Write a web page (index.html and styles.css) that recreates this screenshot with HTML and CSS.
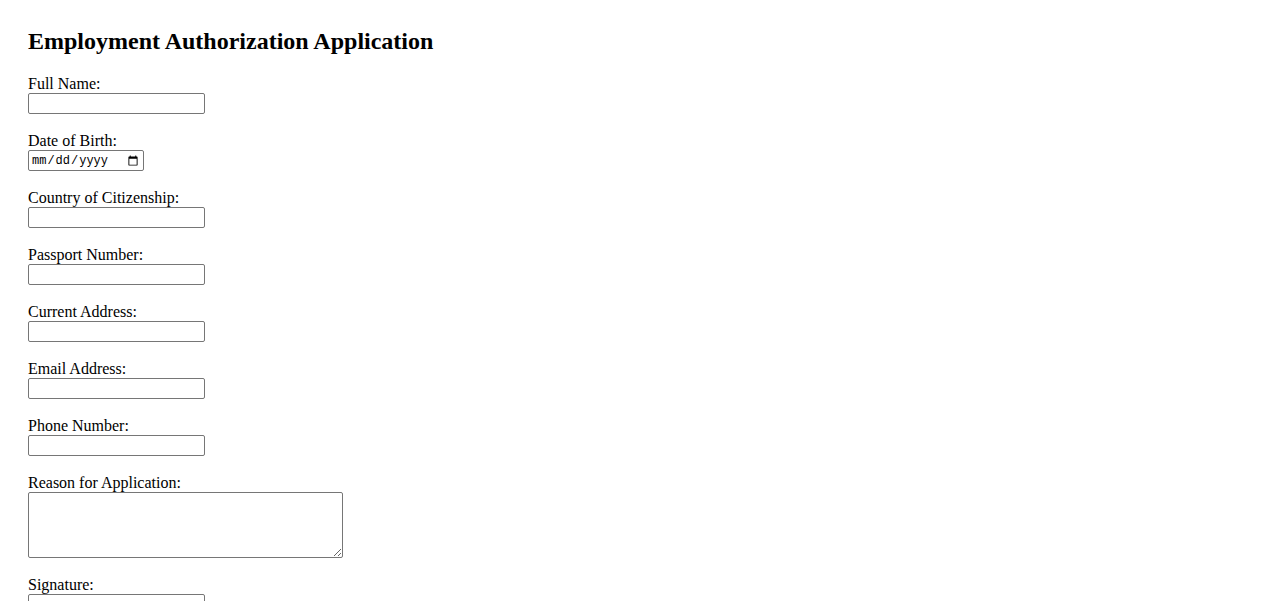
FILE: index.html
```html
<!DOCTYPE html>
<html lang="en">
<head>
<meta charset="utf-8">
<title>Employment Authorization Application</title>
<link rel="stylesheet" href="styles.css">
</head>
<body>
<div class="page">
  <h2 class="title">Employment Authorization Application</h2>
  <form class="form">
    <div class="field"><label for="fullname">Full Name:</label><input class="text" type="text" id="fullname"></div>
    <div class="field"><label for="dob">Date of Birth:</label><input class="date" type="date" id="dob"></div>
    <div class="field"><label for="country">Country of Citizenship:</label><input class="text" type="text" id="country"></div>
    <div class="field"><label for="passport">Passport Number:</label><input class="text" type="text" id="passport"></div>
    <div class="field"><label for="address">Current Address:</label><input class="text" type="text" id="address"></div>
    <div class="field"><label for="email">Email Address:</label><input class="text" type="email" id="email"></div>
    <div class="field"><label for="phone">Phone Number:</label><input class="text" type="tel" id="phone"></div>
    <div class="field"><label for="reason">Reason for Application:</label><textarea class="area" id="reason"></textarea></div>
    <div class="field"><label for="signature">Signature:</label><input class="text" type="text" id="signature"></div>
    <div class="field"><label for="date">Date:</label><input class="date" type="date" id="date"></div>
  </form>
</div>
</body>
</html>
```
FILE: styles.css
```css
html, body {
  background: #ffffff;
}
body {
  margin: 8px;
  font-family: "Liberation Serif", "Times New Roman", serif;
  font-size: 16px;
  color: #000000;
}
.page {
  padding: 20px;
}
.title {
  margin: 0 0 20px 0;
  font-size: 24px;
  font-weight: bold;
  line-height: 27px;
}
.form {
  display: flex;
  flex-direction: column;
  gap: 18px;
}
.field {
  display: flex;
  flex-direction: column;
  align-items: flex-start;
}
.field label {
  line-height: 18px;
  height: 18px;
}
.text,
.date,
.area {
  box-sizing: border-box;
  margin: 0;
  border: 1px solid #767676;
  border-radius: 2px;
  background: #ffffff;
  color: #000000;
}
.text {
  width: 177px;
  height: 21px;
  padding: 1px 2px;
  font-family: "Liberation Sans", Arial, sans-serif;
  font-size: 13.33px;
}
.date {
  width: 116px;
  height: 21px;
  padding: 1px 2px;
  font-family: "Liberation Mono", "Courier New", monospace;
  font-size: 12px;
}
.area {
  width: 315px;
  height: 66px;
  padding: 2px;
  font-family: "Liberation Mono", monospace;
  font-size: 13.33px;
}
```
